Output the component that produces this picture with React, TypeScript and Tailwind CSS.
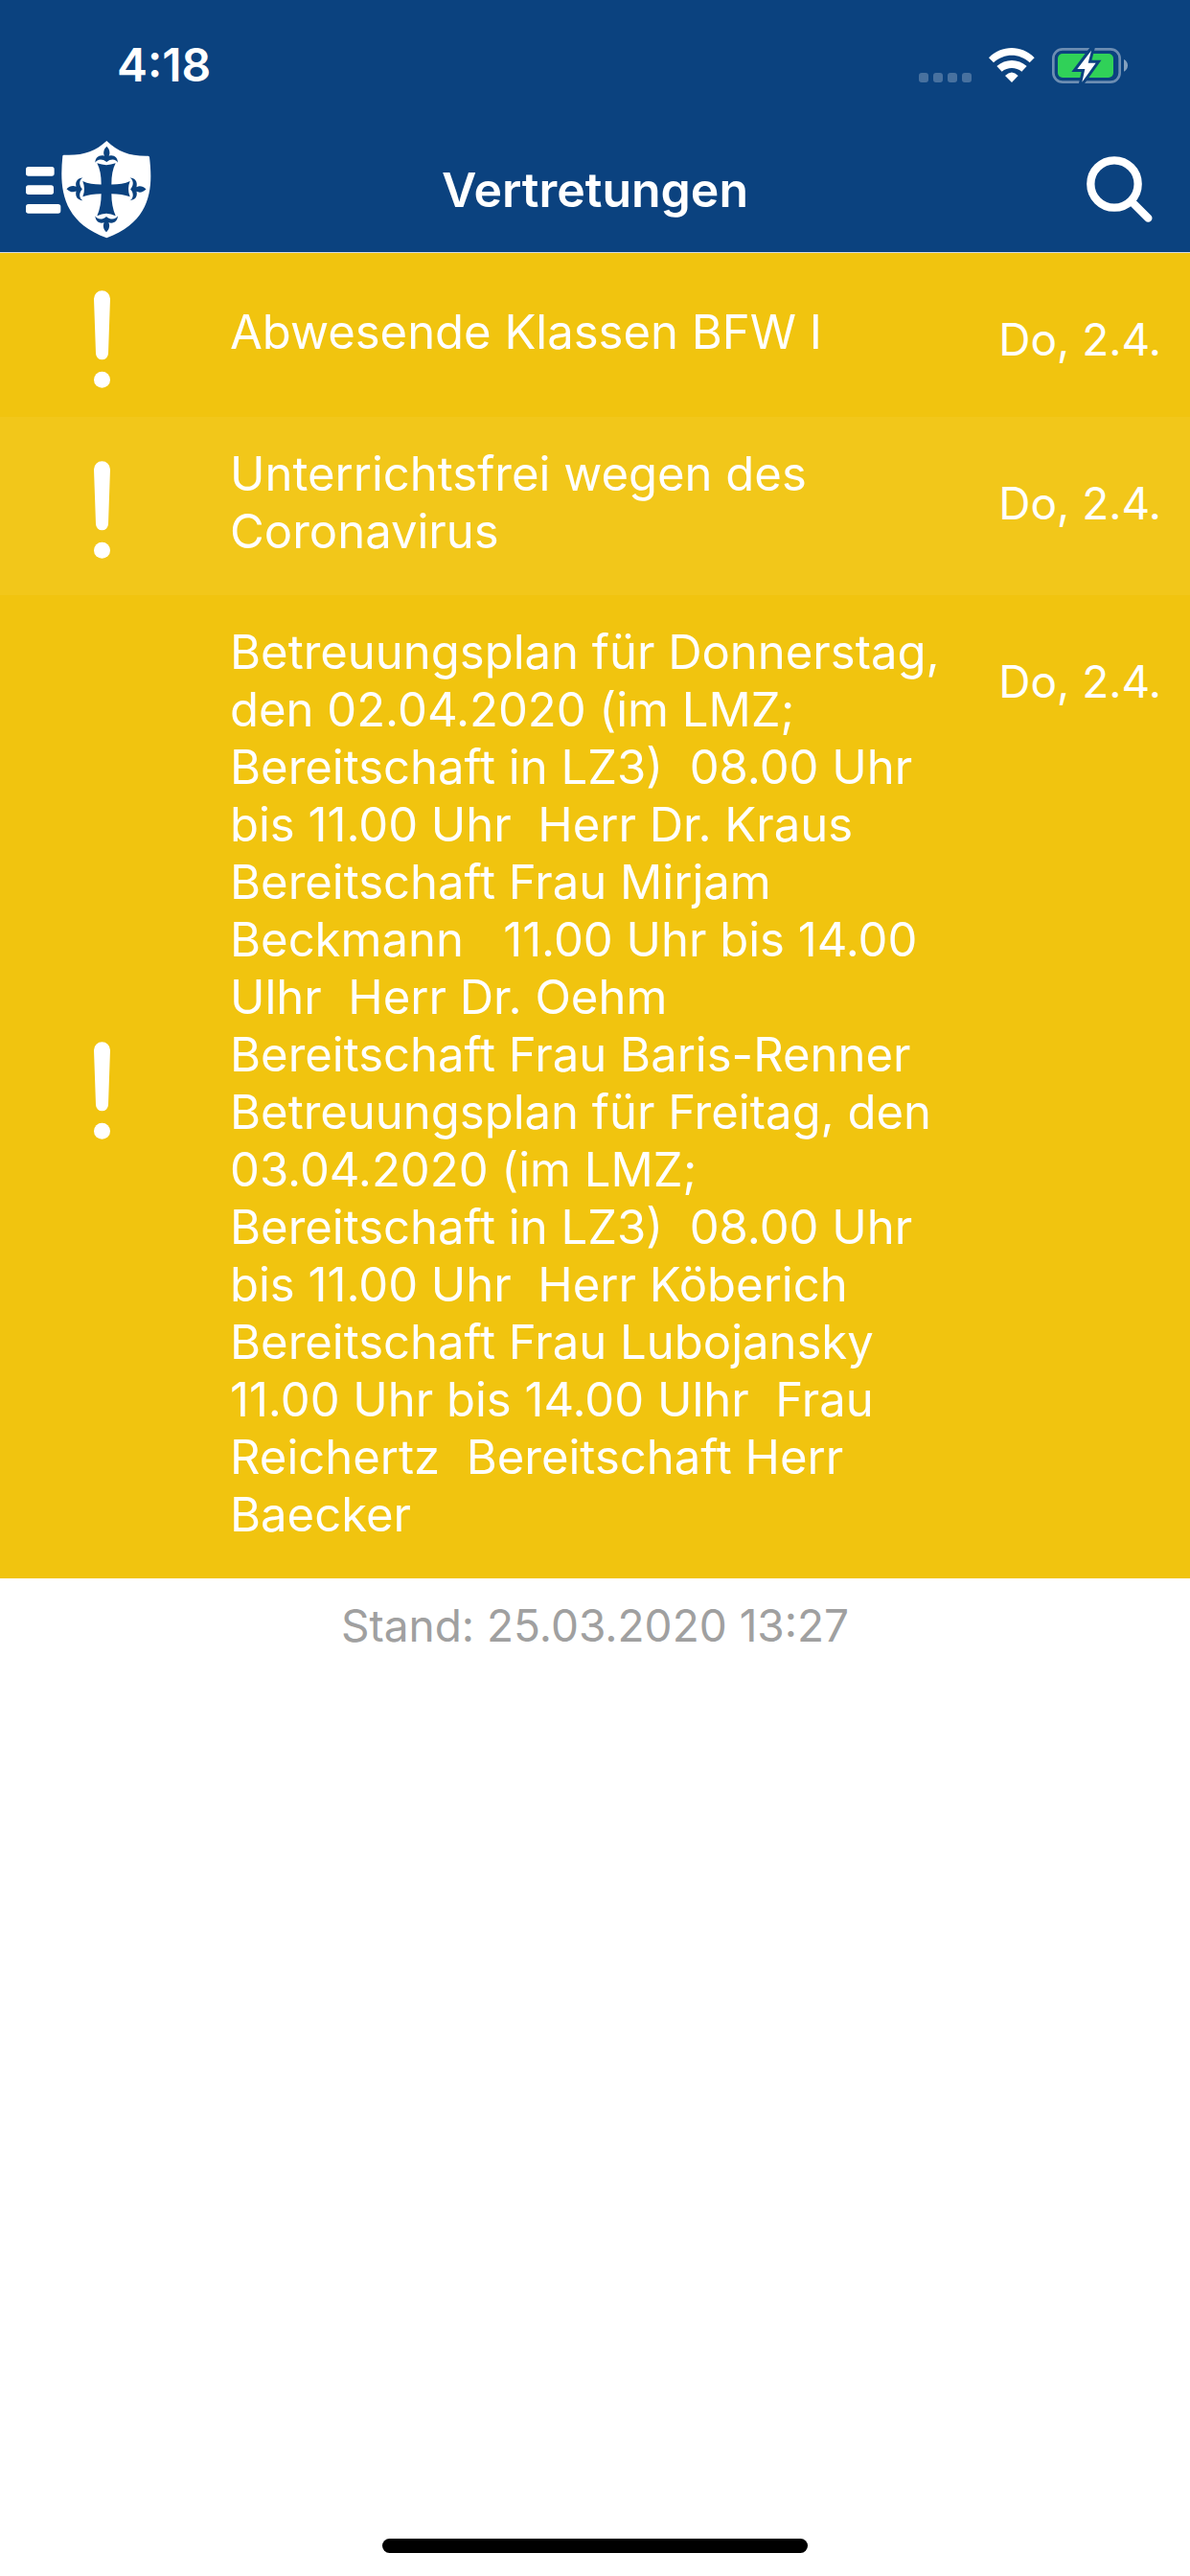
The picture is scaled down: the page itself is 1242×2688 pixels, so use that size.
interface Notice {
  id: number;
  text: string;
  date: string;
}

const NOTICES: Notice[] = [
  { id: 1, text: 'Abwesende Klassen BFW I', date: 'Do, 2.4.' },
  { id: 2, text: 'Unterrichtsfrei wegen des\nCoronavirus', date: 'Do, 2.4.' },
  {
    id: 3,
    text: [
      'Betreuungsplan für Donnerstag,',
      'den 02.04.2020 (im LMZ;',
      'Bereitschaft in LZ3)  08.00 Uhr',
      'bis 11.00 Uhr  Herr Dr. Kraus',
      'Bereitschaft Frau Mirjam',
      'Beckmann   11.00 Uhr bis 14.00',
      'Ulhr  Herr Dr. Oehm',
      'Bereitschaft Frau Baris-Renner',
      'Betreuungsplan für Freitag, den',
      '03.04.2020 (im LMZ;',
      'Bereitschaft in LZ3)  08.00 Uhr',
      'bis 11.00 Uhr  Herr Köberich',
      'Bereitschaft Frau Lubojansky',
      '11.00 Uhr bis 14.00 Ulhr  Frau',
      'Reichertz  Bereitschaft Herr',
      'Baecker',
    ].join('\n'),
    date: 'Do, 2.4.',
  },
];

function Fleur({ transform }: { transform?: string }) {
  return (
    <path
      transform={transform}
      d="M298 119C299 103 309 94 327 98C322 88 325 77 334 68C343 77 346 88 341 98C358 94 368 103 369 119C365 109 348 104 334 117C319 104 303 109 298 119Z"
    />
  );
}

function MenuLogo() {
  return (
    <svg viewBox="81 51 393 306" className="h-[102px] w-[131px]" aria-hidden="true">
      <g fill="#fff">
        <rect x="81" y="132" width="89" height="29" rx="8" />
        <rect x="81" y="190" width="87" height="29" rx="8" />
        <rect x="81" y="249" width="109" height="29" rx="8" />
        <path d="M334 51C372 86 405 99 463 98Q467 98 468 102C478 190 480 302 334 355C188 302 187 190 196 99Q196 95 200 95C258 98 297 85 334 51Z" />
      </g>
      <g fill="#0b427f">
        <path d="M317 202V187C317 160 313 138 304 121Q333 132 362 121C353 138 349 160 349 187V217C349 242 353 266 362 286Q333 270 304 286C313 266 317 242 317 217Z" />
        <path d="M333 187C306 189 280 187 259 177Q269 202 259 226C280 218 306 215 333 217C360 215 386 218 407 226Q397 202 407 177C386 187 360 189 333 187Z" />
        <Fleur />
        <Fleur transform="rotate(180 333.5 202.5)" />
        <Fleur transform="translate(9 0) rotate(-90 333.5 202)" />
        <Fleur transform="translate(-10 0) rotate(90 333.5 202)" />
      </g>
    </svg>
  );
}

function StatusBar() {
  return (
    <div className="flex h-[132px] items-center justify-between pt-1 pr-[65px] pl-[122px]">
      <time className="text-[48px] leading-[60px] font-semibold">4:18</time>
      <div className="flex items-end gap-[18px]">
        <div className="flex gap-[5px] pb-px">
          {[0, 1, 2, 3].map((i) => (
            <span key={i} className="size-[10px] rounded-[3px] bg-white/25" />
          ))}
        </div>
        <svg viewBox="305 87 144 111" className="h-[37px] w-[48px]" fill="#fff" aria-label="WLAN">
          <path d="M305 118C345 77 408 77 448 118L433 133C401 103 353 103 320 133Z" />
          <path d="M330 144C357 120 397 120 424 144L408 161C390 146 364 146 346 161Z" />
          <path d="M356 174Q377 153 397 174L377 195Z" />
        </svg>
        <svg viewBox="504 87 237 111" className="h-[37px] w-[79px]" aria-label="Akku wird geladen">
          <rect x="508" y="91" width="208" height="103" rx="29" fill="none" stroke="#fff" strokeOpacity="0.4" strokeWidth="8" />
          <path d="M729 123C745 130 745 154 729 161Z" fill="#fff" fillOpacity="0.5" />
          <rect x="522" y="105" width="174" height="75" rx="15" fill="#30d158" />
          <path d="M627 95L583 153H607L598 194L641 134H617Z" fill="#0b427f" stroke="#0b427f" strokeWidth="18" strokeMiterlimit="10" />
          <path d="M627 95L583 153H607L598 194L641 134H617Z" fill="#fff" />
        </svg>
      </div>
    </div>
  );
}

function NavBar() {
  return (
    <div className="grid h-[131px] grid-cols-[1fr_auto_1fr] items-center px-[27px]">
      <button type="button" aria-label="Menü" className="justify-self-start">
        <MenuLogo />
      </button>
      <h1 className="text-[50px] leading-[60px] font-semibold">Vertretungen</h1>
      <button type="button" aria-label="Suchen" className="mr-3 justify-self-end">
        <svg viewBox="98 70 207 207" className="size-[69px]" fill="none" stroke="#fff" strokeWidth="25" strokeLinecap="round" aria-hidden="true">
          <circle cx="185" cy="157" r="74" />
          <path d="M240 213L291 264" />
        </svg>
      </button>
    </div>
  );
}

function NoticeRow({ notice }: { notice: Notice }) {
  return (
    <li className="flex min-h-[171px] items-center bg-[#f1c40f] even:bg-[#f2c71a]">
      <svg viewBox="114 95 51 305" className="mt-2 mr-[125px] ml-[98px] h-[102px] w-[17px] shrink-0" fill="#fff" aria-hidden="true">
        <path d="M114 121A25.5 25.5 0 0 1 165 121L159 292A19.5 19.5 0 0 1 120 292Z" />
        <circle cx="139.5" cy="374" r="25.5" />
      </svg>
      <p className="flex-1 pt-[30px] pb-9 text-[49px] leading-[60px] whitespace-pre">{notice.text}</p>
      <time className="mt-[60px] mr-[30px] self-start text-[46px] leading-[60px]">{notice.date}</time>
    </li>
  );
}

export default function App() {
  return (
    <div className="flex min-h-screen flex-col bg-white font-['Inter','Liberation_Sans',sans-serif] text-white">
      <header className="border-b border-[#d9dde3] bg-[#0b427f]">
        <StatusBar />
        <NavBar />
      </header>

      <main>
        <ul>
          {NOTICES.map((n) => (
            <NoticeRow key={n.id} notice={n} />
          ))}
        </ul>
        <p className="mt-[19px] text-center text-[46px] leading-[60px] text-[#a0a0a0]">Stand: 25.03.2020 13:27</p>
      </main>

      {/* Home indicator */}
      <div className="mx-auto mt-auto mb-6 h-[15px] w-[444px] rounded-full bg-black" />
    </div>
  );
}
